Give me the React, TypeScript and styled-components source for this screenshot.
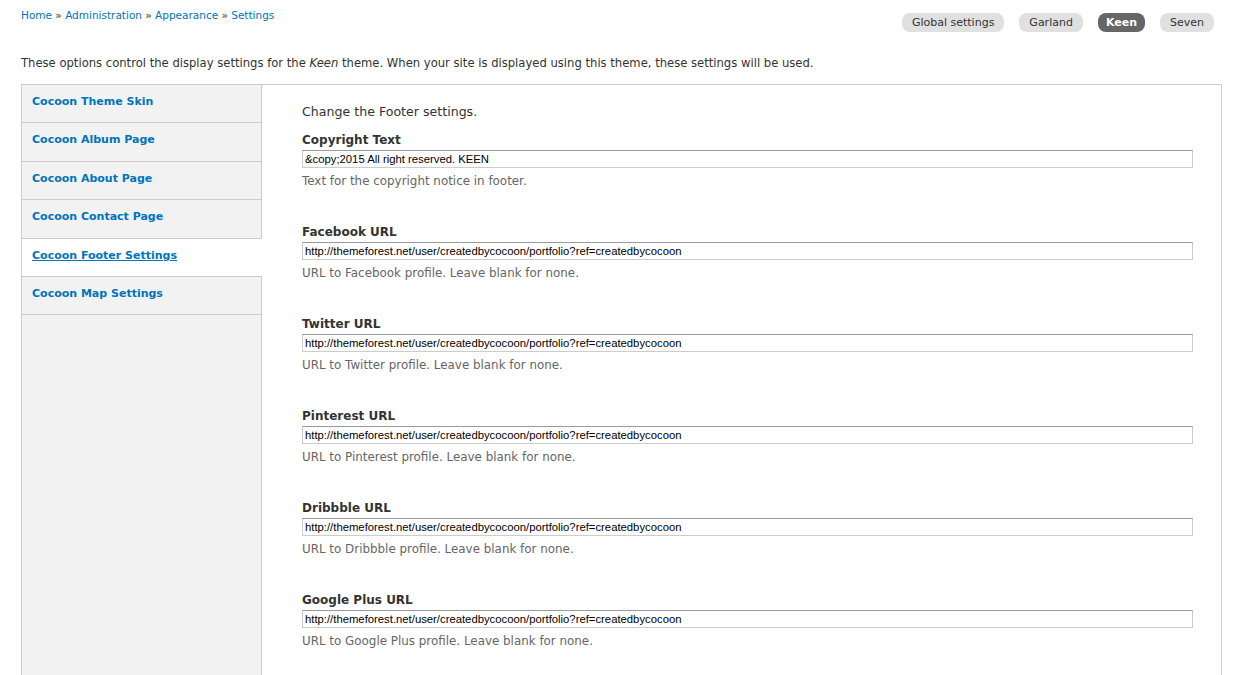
import React from "react";
import styled, { createGlobalStyle } from "styled-components";

const Global = createGlobalStyle`
  html, body { margin: 0; padding: 0; background: #fff; }
  body {
    font-family: "DejaVu Sans", "Lucida Grande", Verdana, sans-serif;
    font-size: 11px;
    color: #333;
  }
`;

const Page = styled.div`
  padding: 0 21px 0 21px;
`;

const Header = styled.div`
  display: flex;
  justify-content: space-between;
  align-items: flex-start;
  height: 56px;
`;

const Crumbs = styled.div`
  padding-top: 9px;
  font-size: 10.5px;
  color: #333;
  a { color: #0074bd; text-decoration: none; }
`;

const Tabs = styled.div`
  display: flex;
  margin-top: 13px;
  margin-right: 8px;
`;

const Tab = styled.span<{ $active?: boolean }>`
  display: inline-block;
  height: 19px;
  line-height: 19px;
  padding: 0 ${(p) => (p.$active ? 8 : 10)}px;
  margin-left: 15px;
  border-radius: 8px;
  background: ${(p) => (p.$active ? "#666" : "#e0e0e0")};
  color: ${(p) => (p.$active ? "#fff" : "#333")};
  font-weight: ${(p) => (p.$active ? "bold" : "normal")};
  font-size: 11px;
`;

const Intro = styled.p`
  margin: 0 0 13px;
  font-size: 11.6px;
  line-height: 15px;
  color: #333;
`;

const Box = styled.div`
  display: flex;
  border: 1px solid #ccc;
  min-height: 620px;
`;

const Side = styled.ul`
  list-style: none;
  margin: 0;
  padding: 0;
  width: 239px;
  flex: none;
  background: #f2f2f2;
  border-right: 1px solid #ccc;
`;

const SideItem = styled.li<{ $active?: boolean }>`
  box-sizing: border-box;
  height: 38.4px;
  border-bottom: 1px solid #ccc;
  background: ${(p) => (p.$active ? "#fff" : "transparent")};
  margin-right: ${(p) => (p.$active ? "-1px" : "0")};
  padding: 10px 0 0 10px;
  a {
    color: #0074bd;
    font-weight: bold;
    font-size: 11px;
    text-decoration: ${(p) => (p.$active ? "underline" : "none")};
  }
`;

const Content = styled.div`
  flex: 1;
  padding: 19px 28px 0 40px;
`;

const Lead = styled.p`
  margin: 0 0 14px;
  font-size: 12.6px;
  line-height: 15px;
`;

const Field = styled.div`
  margin-bottom: 37px;
`;

const Label = styled.label`
  display: block;
  font-weight: bold;
  font-size: 12px;
  line-height: 14px;
  margin-bottom: 3px;
  color: #333;
`;

const Input = styled.input`
  display: block;
  box-sizing: border-box;
  width: 100%;
  height: 18px;
  margin: 0;
  padding: 0 2px;
  border: 1px solid #ccc;
  border-top-color: #999;
  font-family: "Liberation Sans", Arial, sans-serif;
  font-size: 11.3px;
  color: #000;
  outline: none;
`;

const Help = styled.div`
  margin-top: 6px;
  font-size: 11.9px;
  line-height: 14px;
  color: #666;
`;

const tabs = ["Global settings", "Garland", "Keen", "Seven"];
const items = [
  "Cocoon Theme Skin",
  "Cocoon Album Page",
  "Cocoon About Page",
  "Cocoon Contact Page",
  "Cocoon Footer Settings",
  "Cocoon Map Settings",
];
const url = "http://themeforest.net/user/createdbycocoon/portfolio?ref=createdbycocoon";
const fields = [
  { label: "Copyright Text", value: "&copy;2015 All right reserved. KEEN", help: "Text for the copyright notice in footer." },
  { label: "Facebook URL", value: url, help: "URL to Facebook profile. Leave blank for none." },
  { label: "Twitter URL", value: url, help: "URL to Twitter profile. Leave blank for none." },
  { label: "Pinterest URL", value: url, help: "URL to Pinterest profile. Leave blank for none." },
  { label: "Dribbble URL", value: url, help: "URL to Dribbble profile. Leave blank for none." },
  { label: "Google Plus URL", value: url, help: "URL to Google Plus profile. Leave blank for none." },
];

export default function App() {
  return (
    <>
      <Global />
      <Page>
        <Header>
          <Crumbs>
            <a href="#">Home</a> » <a href="#">Administration</a> » <a href="#">Appearance</a> »{" "}
            <a href="#">Settings</a>
          </Crumbs>
          <Tabs>
            {tabs.map((t) => (
              <Tab key={t} $active={t === "Keen"}>
                {t}
              </Tab>
            ))}
          </Tabs>
        </Header>
        <Intro>
          These options control the display settings for the <em>Keen</em> theme. When your site is displayed using
          this theme, these settings will be used.
        </Intro>
        <Box>
          <Side>
            {items.map((it) => (
              <SideItem key={it} $active={it === "Cocoon Footer Settings"}>
                <a href="#">{it}</a>
              </SideItem>
            ))}
          </Side>
          <Content>
            <Lead>Change the Footer settings.</Lead>
            {fields.map((f) => (
              <Field key={f.label}>
                <Label>{f.label}</Label>
                <Input defaultValue={f.value} readOnly />
                <Help>{f.help}</Help>
              </Field>
            ))}
          </Content>
        </Box>
      </Page>
    </>
  );
}
